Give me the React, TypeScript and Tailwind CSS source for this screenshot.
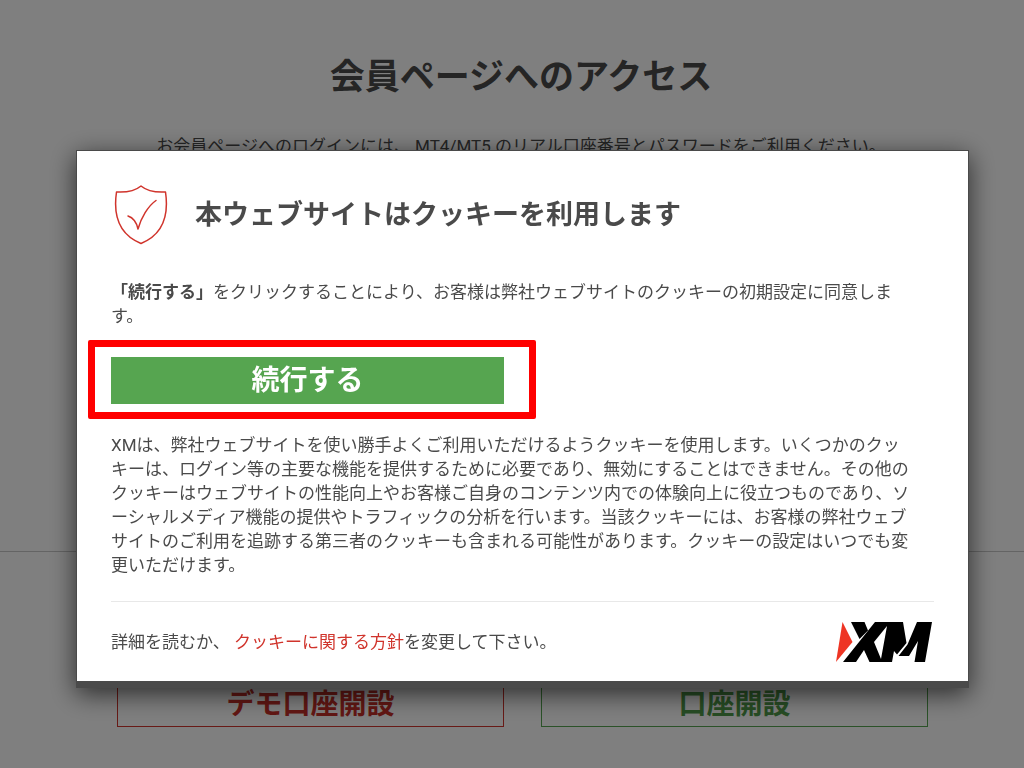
import type { ReactNode } from "react";

function ShieldIcon() {
  return (
    <svg
      className="h-15 w-15 shrink-0"
      viewBox="0 0 60 60"
      fill="none"
      stroke="#d0342c"
      strokeWidth="1.5"
      strokeLinecap="round"
      strokeLinejoin="round"
      aria-hidden="true"
    >
      <path d="M30 1C24 6 14 7.500 5.500 7C2 31 9 50 30 58.500C51 50 58 31 54.500 7C46 7.500 36 6 30 1Z" />
      <path d="M17 31C21.500 32.500 25.500 37 27 44C30 33 37 21 45 15.500" />
    </svg>
  );
}

function XmLogo() {
  return (
    <svg className="mr-0.5 h-10 w-24 shrink-0" viewBox="0 0 96 40" role="img" aria-label="XM">
      <path fill="#ee3524" d="M6.500 0L16.500 20L0 40Z" />
      <path d="M15 0H28.500L32 8.500L23.500 17Z" />
      <path
        fillRule="evenodd"
        d="M39 0H67L70.500 21L61 32.500L58 29L56 40H33.500L28 28L20 40H7ZM51 4L38 20L45 37Z"
      />
      <path d="M81 0H96L89 40H78.500L82 19L73 34H62.500L71.500 22.500Z" />
    </svg>
  );
}

function AccountLink({ className, children }: { className: string; children: ReactNode }) {
  return (
    <a
      href="#"
      className={`flex h-15 items-center justify-center border pt-4 text-[28px] leading-10 font-bold ${className}`}
    >
      {children}
    </a>
  );
}

function MembersPage() {
  return (
    <main className="min-h-screen bg-white">
      <header className="flex h-[551px] flex-col items-center pt-[52px] pl-[18px] text-center">
        <h1 className="text-[35px] leading-[52px] font-bold">会員ページへのアクセス</h1>
        <p className="mt-[30px] text-[17px] leading-6">
          お会員ページへのログインには、 MT4/MT5 のリアル口座番号とパスワードをご利用ください。
        </p>
      </header>
      <section className="grid grid-cols-2 gap-[37px] border-t border-[#c8c8c8] pt-[115px] pr-24 pl-[117px]">
        <AccountLink className="border-[#d0342c] text-[#c62f28]">デモ口座開設</AccountLink>
        <AccountLink className="border-[#56a550] text-[#4f9a49]">口座開設</AccountLink>
      </section>
    </main>
  );
}

function CookieDialog() {
  return (
    <div
      role="dialog"
      aria-modal="true"
      aria-labelledby="cookie-title"
      className="w-full border border-b-[7px] border-[#4a4a4a] bg-white px-[34px] pt-[34px] shadow-[0_6px_24px_rgba(0,0,0,0.65)]"
    >
      <div className="flex items-center gap-6">
        <ShieldIcon />
        <h2 id="cookie-title" className="text-[27px] leading-10 font-bold">
          本ウェブサイトはクッキーを利用します
        </h2>
      </div>

      <p className="mt-[35px] text-[17px] leading-6">
        <strong>「続行する」</strong>
        をクリックすることにより、お客様は弊社ウェブサイトのクッキーの初期設定に同意しま
        <br />
        す。
      </p>

      <div className="mt-3 -ml-[23px] max-w-[448px] rounded-[2px] border-[7px] border-[#ff0000] pt-[10px] pr-[25px] pb-2 pl-4">
        <button type="button" className="h-[47px] w-full bg-[#56a550] text-[28px] leading-10 font-bold text-white">
          続行する
        </button>
      </div>

      <p className="mt-[14px] text-[17px] leading-6">
        XMは、弊社ウェブサイトを使い勝手よくご利用いただけるようクッキーを使用します。いくつかのクッ
        <br />
        キーは、ログイン等の主要な機能を提供するために必要であり、無効にすることはできません。その他の
        <br />
        クッキーはウェブサイトの性能向上やお客様ご自身のコンテンツ内での体験向上に役立つものであり、ソ
        <br />
        ーシャルメディア機能の提供やトラフィックの分析を行います。当該クッキーには、お客様の弊社ウェブ
        <br />
        サイトのご利用を追跡する第三者のクッキーも含まれる可能性があります。クッキーの設定はいつでも変
        <br />
        更いただけます。
      </p>

      <footer className="mt-6 flex h-20 items-center justify-between border-t border-[#e8e8e8]">
        <p className="text-[17px] leading-6">
          詳細を読むか、{" "}
          <a href="#" className="text-[#d0342c]">
            クッキーに関する方針
          </a>
          を変更して下さい。
        </p>
        <XmLogo />
      </footer>
    </div>
  );
}

export default function App() {
  return (
    <div lang="ja" className="font-[Roboto,'Noto_Sans_CJK_JP',sans-serif] text-[#4a4a4a]">
      <MembersPage />
      <div className="fixed inset-0 flex items-start bg-black/50 pt-[150px] pr-[55px] pl-[76px]">
        <CookieDialog />
      </div>
    </div>
  );
}
